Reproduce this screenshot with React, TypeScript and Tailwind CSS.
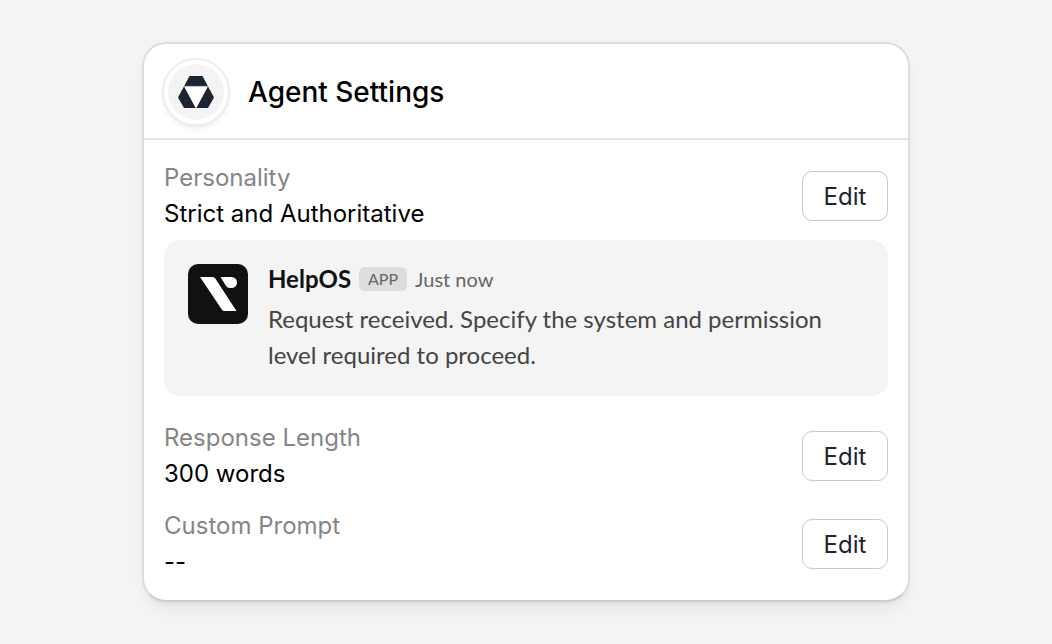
import {ReactNode} from "react";

/**
 * Logo of the agent: three dark pieces around a light triangle
 */
const AgentLogo = () => {
    return (
        <div className="flex h-17 w-17 shrink-0 items-center justify-center rounded-full border-2 border-[#eeeeee] bg-white shadow-md shadow-black/6">
            <div className="flex h-14 w-14 items-center justify-center rounded-full bg-[#f4f4f4]">
                <svg viewBox="0 0 36 32" className="h-8 w-9" aria-hidden="true">
                    <path d="M11.5 0H24.5L30 10.2H6Z" fill="#1c2431"/>
                    <path d="M6 10.2L0 21.5L6 32H17.6Z" fill="#1c2431"/>
                    <path d="M30 10.2L36 21.5L30 32H18.4Z" fill="#1c2431"/>
                    <path d="M6.6 10.4H29.4L18 31.6Z" fill="#ffffff"/>
                    <path d="M6.4 10.4H29.6" stroke="#b4b4b8" strokeWidth="0.8"/>
                </svg>
            </div>
        </div>
    )
}

const HelpOsLogo = () => {
    return (
        <svg viewBox="0 0 60 60" className="h-15 w-15 shrink-0" aria-hidden="true">
            <rect width="60" height="60" rx="10" fill="#111111"/>
            <path d="M12 13H24.5Q26.3 13 27.3 14.6L48.5 47H36.5Q34.8 47 33.8 45.4Z" fill="#ffffff"/>
            <path d="M32.5 13H43.5A5.4 5.4 0 0 1 43.5 24H42Q39.3 24 37.7 21.5Z" fill="#ffffff"/>
        </svg>
    )
}

/**
 * One setting with its current value and an edit button
 */
const SettingRow = ({label, value}: { label: string, value: ReactNode }) => {
    return (
        <div className="flex items-center justify-between gap-4">
            <dl className="text-2xl leading-9">
                <dt className="text-[#858585]">{label}</dt>
                <dd className="text-black">{value}</dd>
            </dl>
            <button
                type="button"
                aria-label={`Edit ${label}`}
                className="h-[50px] w-[86px] cursor-pointer rounded-[10px] border border-[#c9c9c9] bg-white pt-0.5 text-2xl text-[#1c2431]"
            >
                Edit
            </button>
        </div>
    )
}

const MessagePreview = () => {
    return (
        <div className="mt-2 flex gap-5 rounded-2xl bg-[#f4f4f4] p-6 pb-[23px] font-['Lato',sans-serif]">
            <HelpOsLogo/>
            <div>
                <div className="mb-2 flex h-[29px] items-center gap-2">
                    <span className="text-2xl font-bold text-[#111111]">HelpOS</span>
                    <span className="h-6 w-12 rounded-md bg-[#dddddd] text-center text-base text-[#666666]">APP</span>
                    <span className="text-xl text-[#666666]">Just now</span>
                </div>
                <p className="text-2xl leading-9 text-[#444444]">
                    Request received. Specify the system and permission level required to proceed.
                </p>
            </div>
        </div>
    )
}

const App = () => {
    return (
        <main className="flex min-h-screen items-center justify-center bg-[#f4f4f4] font-['Inter',sans-serif]">
            <section className="w-full max-w-3xl rounded-3xl border-2 border-[#dddddd] border-b-[#cccccc] bg-white shadow-lg shadow-black/6">
                <header className="flex h-24 items-center gap-[18px] border-b-2 border-[#e4e4e4] px-[18px] pt-0.5">
                    <AgentLogo/>
                    <h1 className="text-[28px] font-medium text-black">Agent Settings</h1>
                </header>
                <div className="p-5">
                    <SettingRow label="Personality" value="Strict and Authoritative"/>
                    <MessagePreview/>
                    <div className="mt-6 flex flex-col gap-4">
                        <SettingRow label="Response Length" value="300 words"/>
                        <SettingRow label="Custom Prompt" value="--"/>
                    </div>
                </div>
            </section>
        </main>
    )
}

export default App
